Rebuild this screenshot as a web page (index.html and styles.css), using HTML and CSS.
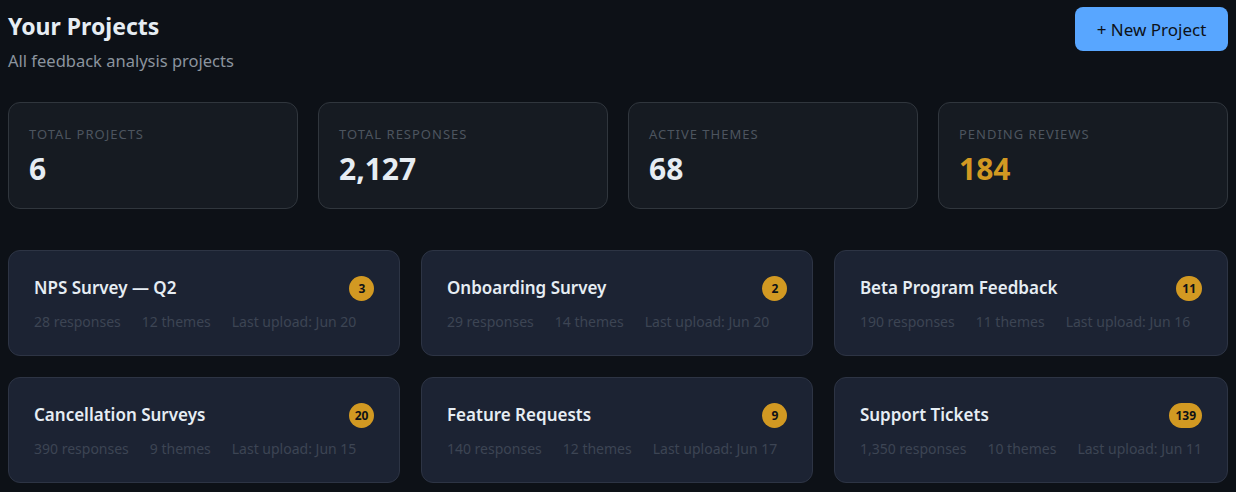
FILE: index.html
```html
<!DOCTYPE html>
<html lang="en">

<head>
    <meta charset="UTF-8">
    <meta name="viewport" content="width=device-width, initial-scale=1.0">
    <title>Your Projects</title>
    <link rel="stylesheet" href="styles.css">
</head>

<body>
    <div class="page">
        <div class="header">
            <div>
                <h1>Your Projects</h1>
                <p class="sub">All feedback analysis projects</p>
            </div>
            <button class="btn">+ New Project</button>
        </div>

        <!-- 统计卡片 -->
        <div class="stats">
            <div class="stat">
                <div class="label">Total Projects</div>
                <div class="value">6</div>
            </div>
            <div class="stat">
                <div class="label">Total Responses</div>
                <div class="value">2,127</div>
            </div>
            <div class="stat">
                <div class="label">Active Themes</div>
                <div class="value">68</div>
            </div>
            <div class="stat">
                <div class="label">Pending Reviews</div>
                <div class="value warn">184</div>
            </div>
        </div>

        <!-- 项目列表 -->
        <div class="projects">
            <div class="card">
                <div class="top"><span class="name">NPS Survey — Q2</span><span class="badge">3</span></div>
                <div class="meta"><span>28 responses</span><span>12 themes</span><span>Last upload: Jun 20</span></div>
            </div>
            <div class="card">
                <div class="top"><span class="name">Onboarding Survey</span><span class="badge">2</span></div>
                <div class="meta"><span>29 responses</span><span>14 themes</span><span>Last upload: Jun 20</span></div>
            </div>
            <div class="card">
                <div class="top"><span class="name">Beta Program Feedback</span><span class="badge">11</span></div>
                <div class="meta"><span>190 responses</span><span>11 themes</span><span>Last upload: Jun 16</span></div>
            </div>
            <div class="card">
                <div class="top"><span class="name">Cancellation Surveys</span><span class="badge">20</span></div>
                <div class="meta"><span>390 responses</span><span>9 themes</span><span>Last upload: Jun 15</span></div>
            </div>
            <div class="card">
                <div class="top"><span class="name">Feature Requests</span><span class="badge">9</span></div>
                <div class="meta"><span>140 responses</span><span>12 themes</span><span>Last upload: Jun 17</span></div>
            </div>
            <div class="card">
                <div class="top"><span class="name">Support Tickets</span><span class="badge">139</span></div>
                <div class="meta"><span>1,350 responses</span><span>10 themes</span><span>Last upload: Jun 11</span></div>
            </div>
        </div>
    </div>
</body>

</html>
```

FILE: styles.css
```css
* {
    margin: 0;
    padding: 0;
    box-sizing: border-box;
}

body {
    background: #0d1117;
    color: #e6edf3;
    font-family: "Segoe UI", "Noto Sans", sans-serif;
}

.page {
    padding: 7px 8px;
}

/* 标题区 */
.header {
    display: flex;
    justify-content: space-between;
    align-items: flex-start;
}

h1 {
    font-size: 23px;
    font-weight: 700;
    line-height: 38px;
}

.sub {
    margin-top: 5px;
    font-size: 16.5px;
    color: #8b949e;
    line-height: 22px;
}

.btn {
    width: 153px;
    height: 44px;
    border: none;
    border-radius: 8px;
    background: #58a6ff;
    color: #0d1117;
    font-family: inherit;
    font-size: 17px;
    cursor: pointer;
}

/* 统计 */
.stats {
    display: grid;
    grid-template-columns: repeat(4, 1fr);
    gap: 20px;
    margin-top: 30px;
}

.stat {
    height: 107px;
    padding: 20px 20px;
    background: #161b22;
    border: 1px solid #30363d;
    border-radius: 12px;
}

.label {
    font-size: 13px;
    text-transform: uppercase;
    letter-spacing: 1px;
    color: #4d555f;
    line-height: 22px;
}

.value {
    margin-top: 5px;
    font-size: 30px;
    font-weight: 700;
    line-height: 38px;
}

.warn {
    color: #d29922;
}

/* 项目卡片 */
.projects {
    display: grid;
    grid-template-columns: repeat(3, 1fr);
    gap: 21px 20.5px;
    margin-top: 41px;
}

.card {
    height: 106px;
    padding: 24px 25px;
    background: #1c2333;
    border: 1px solid #2d3444;
    border-radius: 12px;
}

.top {
    display: flex;
    justify-content: space-between;
    align-items: center;
}

.name {
    font-size: 17px;
    font-weight: 600;
    line-height: 26px;
}

.badge {
    min-width: 25px;
    height: 25px;
    padding: 0 6px;
    border-radius: 13px;
    background: #d29922;
    color: #0d1117;
    font-size: 12px;
    font-weight: 700;
    line-height: 25px;
    text-align: center;
}

.meta {
    display: flex;
    gap: 21px;
    margin-top: 10px;
    font-size: 14px;
    color: #3d4554;
    line-height: 22px;
    white-space: nowrap;
}
```
